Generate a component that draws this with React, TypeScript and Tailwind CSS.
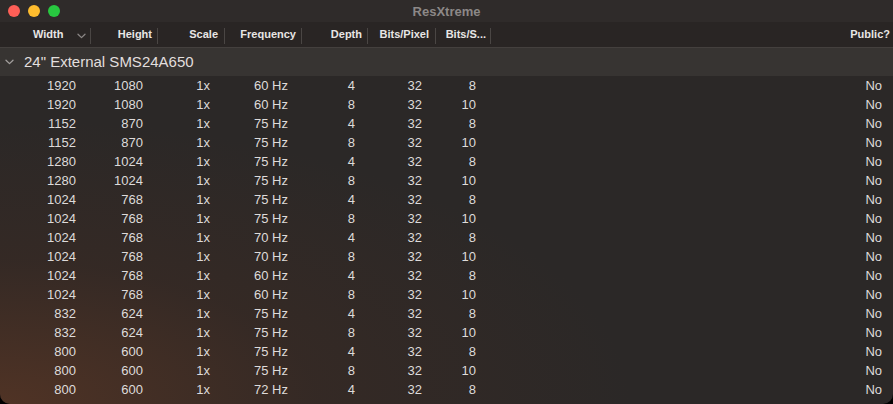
import React from "react";

const rows: [string, string, string, string, string, string, string][] = [
  ["1920", "1080", "1x", "60 Hz", "4", "32", "8"],
  ["1920", "1080", "1x", "60 Hz", "8", "32", "10"],
  ["1152", "870", "1x", "75 Hz", "4", "32", "8"],
  ["1152", "870", "1x", "75 Hz", "8", "32", "10"],
  ["1280", "1024", "1x", "75 Hz", "4", "32", "8"],
  ["1280", "1024", "1x", "75 Hz", "8", "32", "10"],
  ["1024", "768", "1x", "75 Hz", "4", "32", "8"],
  ["1024", "768", "1x", "75 Hz", "8", "32", "10"],
  ["1024", "768", "1x", "70 Hz", "4", "32", "8"],
  ["1024", "768", "1x", "70 Hz", "8", "32", "10"],
  ["1024", "768", "1x", "60 Hz", "4", "32", "8"],
  ["1024", "768", "1x", "60 Hz", "8", "32", "10"],
  ["832", "624", "1x", "75 Hz", "4", "32", "8"],
  ["832", "624", "1x", "75 Hz", "8", "32", "10"],
  ["800", "600", "1x", "75 Hz", "4", "32", "8"],
  ["800", "600", "1x", "75 Hz", "8", "32", "10"],
  ["800", "600", "1x", "72 Hz", "4", "32", "8"],
];

const Sep = () => <div className="absolute right-0 top-[6px] h-[16px] w-px bg-[#4a4644]" />;

function Chevron({ className }: { className?: string }) {
  return (
    <svg width="9" height="6" viewBox="0 0 9 6" className={className}>
      <path d="M1 1.2 L4.5 4.6 L8 1.2" fill="none" stroke="currentColor" strokeWidth="1.3" strokeLinecap="round" strokeLinejoin="round" />
    </svg>
  );
}

export default function App() {
  return (
    <div className="w-[893px] h-[404px] bg-black overflow-hidden" style={{ fontFamily: '"Liberation Sans", Arial, sans-serif' }}>
      <div className="relative w-[893px] h-[404px] rounded-b-[10px] overflow-hidden bg-[#2b2827]">
        {/* tint */}
        <div className="absolute inset-0 pointer-events-none bg-[radial-gradient(ellipse_at_0%_100%,rgba(110,60,35,0.55)_0%,rgba(80,45,30,0.25)_25%,rgba(43,40,39,0)_50%)]" />
        <div className="relative flex flex-col">
          {/* title bar */}
          <div className="relative h-[22px] bg-[#2f2b2a] flex items-center justify-center">
            <div className="absolute left-[8px] top-[5px] flex gap-[8px]">
              <div className="w-[12px] h-[12px] rounded-full bg-[#fe5f57]" />
              <div className="w-[12px] h-[12px] rounded-full bg-[#febc2e]" />
              <div className="w-[12px] h-[12px] rounded-full bg-[#28c840]" />
            </div>
            <span className="text-[13px] font-bold text-[#8c8887] mt-[1px]">ResXtreme</span>
          </div>
          {/* header */}
          <div className="h-[26px] bg-[#292524] border-b border-[#44403e] flex text-[11px] font-bold text-[#e8e6e5]">
            <div className="relative w-[91px] h-full flex items-center pl-[33px]">
              <span>Width</span>
              <Chevron className="absolute left-[77px] top-[11px] text-[#8a8685]" />
              <Sep />
            </div>
            <div className="relative w-[67px] h-full flex items-center justify-end pr-[6px]"><span>Height</span><Sep /></div>
            <div className="relative w-[67px] h-full flex items-center justify-end pr-[7px]"><span>Scale</span><Sep /></div>
            <div className="relative w-[77px] h-full flex items-center justify-end pr-[6px]"><span>Frequency</span><Sep /></div>
            <div className="relative w-[66px] h-full flex items-center justify-end pr-[6px]"><span>Depth</span><Sep /></div>
            <div className="relative w-[68px] h-full flex items-center justify-end pr-[7px]"><span>Bits/Pixel</span><Sep /></div>
            <div className="relative w-[55px] h-full flex items-center justify-end pr-[5px]"><span>Bits/S...</span><Sep /></div>
            <div className="flex-1 h-full flex items-center justify-end pr-[3px]"><span>Public?</span></div>
          </div>
          {/* group row */}
          <div className="h-[28px] bg-[#393534]/90 flex items-center text-[#e2dfde]">
            <Chevron className="ml-[5px] text-[#a29e9d]" />
            <span className="ml-[10px] text-[15px]">24" External SMS24A650</span>
          </div>
          {/* rows */}
          <div className="flex flex-col text-[13px] text-[#dedbda]">
            {rows.map((r, i) => (
              <div key={i} className="h-[19px] flex items-center">
                <div className="w-[91px] text-right pr-[15px]">{r[0]}</div>
                <div className="w-[67px] text-right pr-[15px]">{r[1]}</div>
                <div className="w-[67px] text-right pr-[15px]">{r[2]}</div>
                <div className="w-[77px] text-right pr-[14px]">{r[3]}</div>
                <div className="w-[66px] text-right pr-[13px]">{r[4]}</div>
                <div className="w-[68px] text-right pr-[14px]">{r[5]}</div>
                <div className="w-[55px] text-right pr-[15px]">{r[6]}</div>
                <div className="flex-1 text-right pr-[11px]">No</div>
              </div>
            ))}
          </div>
        </div>
      </div>
    </div>
  );
}
